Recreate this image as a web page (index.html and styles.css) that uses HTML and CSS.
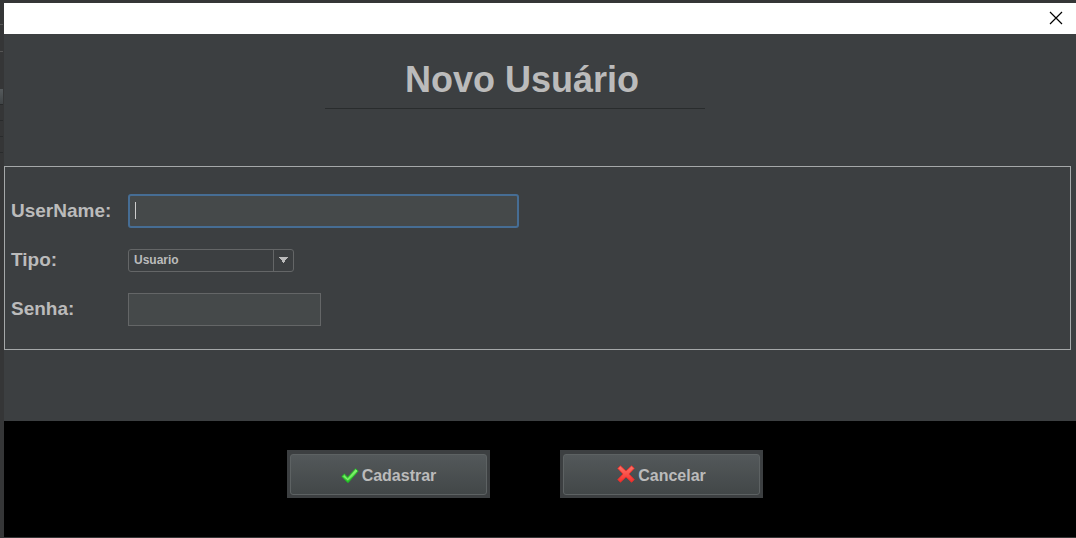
FILE: index.html
```html
<!DOCTYPE html>
<html lang="pt-BR">
<head>
<meta charset="utf-8">
<title>Novo Usuário</title>
<link rel="stylesheet" href="styles.css">
</head>
<body>
<main class="dialog">
  <div class="titlebar">
    <button class="close" type="button" aria-label="Fechar">
      <svg width="14" height="14" viewBox="0 0 14 14"><path d="M1 1L13 13M13 1L1 13" stroke="#000" stroke-width="1.2" fill="none"/></svg>
    </button>
  </div>
  <form class="form">
    <header class="heading">
      <h1 class="title">Novo Usuário</h1>
      <hr class="rule">
    </header>
    <div class="fields">
      <label class="label" for="username">UserName:</label>
      <input class="input input-user" id="username" type="text">
      <label class="label" for="tipo">Tipo:</label>
      <select class="select" id="tipo"><option>Usuario</option></select>
      <label class="label" for="senha">Senha:</label>
      <input class="input input-pass" id="senha" type="password">
    </div>
    <footer class="actions">
      <button class="button" type="submit">
        <span class="face">
          <svg class="icon" width="18" height="18" viewBox="0 0 18 18">
            <defs><linearGradient id="green" x1="0" y1="0" x2="0" y2="1"><stop offset="0" stop-color="#8cf573"/><stop offset="1" stop-color="#1fc522"/></linearGradient></defs>
            <path d="M0.8 9.5L3.4 7L6.6 10.2L14.6 1.8L17.2 4L7 15.8Z" fill="url(#green)" stroke="#22b027" stroke-width="1" stroke-linejoin="round"/>
            <path d="M2.8 9L6.8 12.6L15.2 3.6" fill="none" stroke="#7df069" stroke-width="1.2"/>
          </svg>
          Cadastrar
        </span>
      </button>
      <button class="button" type="button">
        <span class="face">
          <svg class="icon icon-cross" width="18" height="18" viewBox="0 0 18 18">
            <defs><linearGradient id="red" x1="0" y1="0" x2="0" y2="1"><stop offset="0" stop-color="#ff7468"/><stop offset="1" stop-color="#f32f2b"/></linearGradient></defs>
            <path d="M3.4 0.8L9 6L14.6 0.8L17.2 3.4L12 9L17.2 14.6L14.6 17.2L9 12L3.4 17.2L0.8 14.6L6 9L0.8 3.4Z" fill="url(#red)" stroke="#e0302d" stroke-width="1" stroke-linejoin="round"/>
          </svg>
          Cancelar
        </span>
      </button>
    </footer>
  </form>
</main>
</body>
</html>
```
FILE: styles.css
```css
* {
  box-sizing: border-box;
}

body {
  margin: 0;
  min-height: 100vh;
  display: flex;
  padding: 3px 0 1px 4px;
  /* edge of the window behind the dialog */
  background:
    linear-gradient(#555 0 0) 0 24px / 3px 1px no-repeat,
    linear-gradient(#555 0 0) 0 51px / 3px 1px no-repeat,
    linear-gradient(#555a5c, #404446) 0 89px / 3px 15px no-repeat,
    linear-gradient(#292b2c 0 0) 0 104px / 3px 1px no-repeat,
    linear-gradient(#292b2c 0 0) 0 120px / 3px 1px no-repeat,
    linear-gradient(#292b2c 0 0) 0 136px / 3px 1px no-repeat,
    linear-gradient(#292b2c 0 0) 0 152px / 3px 1px no-repeat,
    #353637;
  font-family: "Liberation Sans", Arial, sans-serif;
  font-weight: bold;
  color: #bbb;
}

.dialog {
  flex: 1;
  display: flex;
  flex-direction: column;
  background: #3c3f41;
}

.titlebar {
  display: flex;
  justify-content: flex-end;
  align-items: center;
  height: 31px;
  padding: 0 13px 2px 0;
  background: #fff;
}

.close {
  display: flex;
  padding: 0;
  border: 0;
  background: none;
}

.form {
  flex: 1;
  display: flex;
  flex-direction: column;
}

.heading {
  display: flex;
  flex-direction: column;
  align-items: center;
  height: 132px;
  padding: 25px 50px 0 0;
}

.title {
  margin: 0;
  padding-left: 14px;
  font-size: 36px;
  line-height: 42px;
}

.rule {
  width: 380px;
  margin: 7px 0 0;
  border: 0;
  border-top: 1px solid #292c2d;
}

.fields {
  display: grid;
  grid-template-columns: 117px 1fr;
  grid-template-rows: 34px 24px 34px;
  row-gap: 20px;
  align-items: center;
  justify-items: start;
  margin-right: 5px;
  padding: 27px 6px 23px;
  border: 1px solid #a5a8a9;
}

.label {
  font-size: 19px;
  line-height: 22px;
}

.input {
  height: 33px;
  padding: 0 6px;
  border: 1px solid #646667;
  background: #45494a;
  color: #bbb;
  font: inherit;
  font-size: 16px;
  outline: 0;
}

.input-user {
  width: 391px;
  height: 34px;
  border: 2px solid #466d94;
  border-radius: 3px;
  /* text cursor of the focused field */
  background: linear-gradient(#ccc 0 0) 5px 6px / 1px 17px no-repeat #45494a;
}

.input-pass {
  width: 193px;
}

.select {
  width: 166px;
  height: 23px;
  padding: 0 24px 0 5px;
  border: 1px solid #646667;
  border-radius: 3px;
  appearance: none;
  background:
    conic-gradient(from -38deg at 50% 100%, #bbb 76deg, transparent 0) right 5px center / 9px 6px no-repeat,
    linear-gradient(#646667 0 0) right 19px top 0 / 1px 100% no-repeat,
    #3c3f41;
  color: #bbb;
  font: inherit;
  font-size: 12px;
}

.actions {
  flex: 1;
  display: flex;
  justify-content: center;
  align-items: flex-start;
  gap: 70px;
  margin-top: 71px;
  padding: 29px 30px 39px 0;
  background: #000;
}

.button {
  width: 203px;
  height: 48px;
  padding: 4px 3px 3px;
  border: 0;
  background: #3c3f41;
  color: #bbb;
  font: inherit;
  font-size: 16px;
}

.face {
  display: flex;
  justify-content: center;
  align-items: center;
  gap: 3px;
  height: 41px;
  padding-top: 2px;
  border: 1px solid #5d6263;
  border-radius: 3px;
  background: linear-gradient(#53585a, #424748);
}

.icon-cross {
  margin-bottom: 4px;
}
```
